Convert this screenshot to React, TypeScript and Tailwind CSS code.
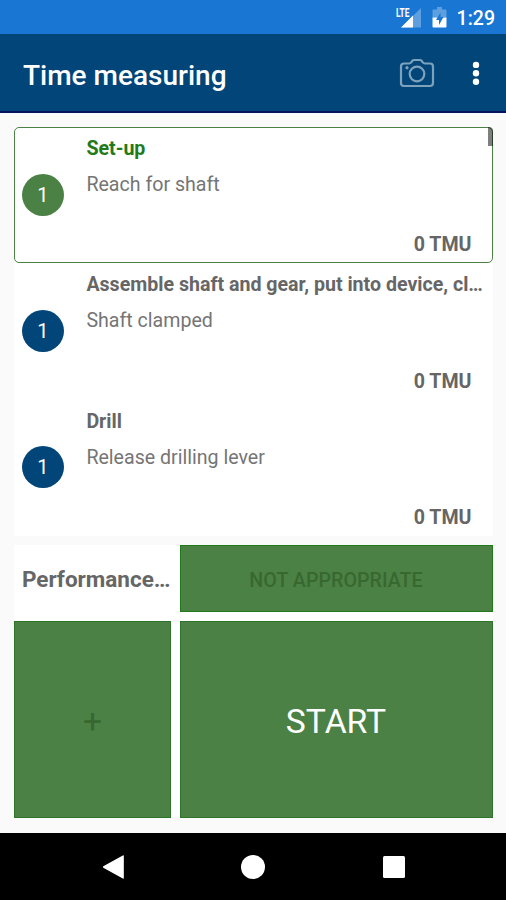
import { useState } from 'react';
import clsx from 'clsx';

interface Step {
    id: number;
    count: number;
    title: string;
    endPoint: string;
    tmu: number;
}

const STEPS: Step[] = [
    { id: 1, count: 1, title: 'Set-up', endPoint: 'Reach for shaft', tmu: 0 },
    { id: 2, count: 1, title: 'Assemble shaft and gear, put into device, cl…', endPoint: 'Shaft clamped', tmu: 0 },
    { id: 3, count: 1, title: 'Drill', endPoint: 'Release drilling lever', tmu: 0 },
];

function StatusBar() {
    return (
        <div className="flex h-[34px] shrink-0 items-center justify-end bg-[#1976d2] pr-[11px] text-white">
            <svg width="28" height="24" viewBox="0 0 28 24" className="mr-[9px]">
                <path d="M26 3v19.5H6z" fill="#fff" fillOpacity="0.3" />
                <path d="M18 10.5v12H6z" fill="#fff" />
                <rect x="0" y="1" width="14.5" height="11.5" fill="#1976d2" />
                <text x="1" y="11.5" fill="#fff" fontSize="12.5" fontWeight="700" textLength="13.5" lengthAdjust="spacingAndGlyphs">LTE</text>
            </svg>
            <svg width="15" height="22" viewBox="0 0 15 22" className="mr-[10px]">
                <path d="M5 1h5v2.5h3.5q1 0 1 1v7H.5v-7q0-1 1-1H5z" fill="#fff" fillOpacity="0.3" />
                <path d="M.5 11.5h14v9q0 1-1 1h-12q-1 0-1-1z" fill="#fff" />
                <path d="M8.5 6.5l-4.5 7.5H7v5l4.5-8h-3z" fill="#1976d2" />
            </svg>
            <span className="pt-1 text-[19.5px] leading-none font-medium">1:29</span>
        </div>
    );
}

function AppBar() {
    return (
        <header className="flex h-[79px] shrink-0 items-center border-b-2 border-[#04125f] bg-[#014579] pr-[25px] pl-[23px] text-white">
            <h1 className="flex-1 pt-1.5 text-[28px] leading-none font-medium">Time measuring</h1>
            <button aria-label="Camera" className="mr-[36px]">
                <svg width="36" height="30" viewBox="0 0 36 30" fill="none" stroke="#7fa2bc" strokeWidth="2.2">
                    <path d="M5 5.5h5q1.5 0 2.5-1.5l.7-1q.8-1 2-1h5.6q1.2 0 2 1l.7 1q1 1.5 2.5 1.5h5q3 0 3 3V25q0 3-3 3H5q-3 0-3-3V8.5q0-3 3-3z" />
                    <circle cx="18" cy="16" r="7.3" />
                    <circle cx="8" cy="9.8" r="1.2" fill="#7fa2bc" strokeWidth="1" />
                </svg>
            </button>
            <button aria-label="More options">
                <svg width="10" height="26" viewBox="0 0 10 26" fill="#fff">
                    <circle cx="5" cy="4.9" r="3.2" />
                    <circle cx="5" cy="13.3" r="3.2" />
                    <circle cx="5" cy="21.7" r="3.2" />
                </svg>
            </button>
        </header>
    );
}

interface StepRowProps {
    step: Step;
    selected: boolean;
    onSelect: (id: number) => void;
}

function StepRow({ step, selected, onSelect }: StepRowProps) {
    return (
        <li
            className={clsx(
                'flex h-[136.4px] items-center rounded-[5px] border-[1.5px] pb-px pl-[6.5px]',
                selected ? 'border-[#4b8145]' : 'border-transparent'
            )}
            onClick={() => onSelect(step.id)}
        >
            <div
                className={clsx(
                    'flex size-[42px] shrink-0 items-center justify-center rounded-full text-[20px] text-white',
                    selected ? 'bg-[#4b8145]' : 'bg-[#014579]'
                )}
            >
                {step.count}
            </div>
            <div className="ml-[22.5px] flex h-full min-w-0 flex-1 flex-col pt-[9px] pr-[5px] pb-1 text-[19.6px] leading-6 text-[#757575]">
                <div className={clsx('truncate font-bold', selected ? 'text-[#1f7a1a]' : 'text-[#666666]')}>{step.title}</div>
                <div className="mt-[12px] truncate">{step.endPoint}</div>
                <div className="mt-auto pr-[15px] text-right font-bold text-[#666666]">{step.tmu} TMU</div>
            </div>
        </li>
    );
}

function NavigationBar() {
    return (
        <nav className="flex h-[67px] shrink-0 items-center justify-center gap-[117.5px] bg-black">
            <svg width="22" height="26" viewBox="0 0 22 26" fill="#fff">
                <path d="M20.8 1.5q1-.5 1 .6v21.8q0 1.1-1 .6L1.3 13.7q-1-.7 0-1.4z" />
            </svg>
            <div className="size-6 rounded-full bg-white" />
            <div className="size-[22px] rounded-[1.5px] bg-white" />
        </nav>
    );
}

export default function App() {
    const [selectedId, setSelectedId] = useState(1);

    return (
        <div className="flex h-[900px] w-[506px] flex-col overflow-hidden bg-[#fafafa] font-[Roboto,sans-serif]">
            <StatusBar />
            <AppBar />

            <main className="flex flex-1 flex-col pt-[14px] pr-[13.5px] pl-[14.4px]">
                <ul className="relative bg-white">
                    {STEPS.map(step => (
                        <StepRow key={step.id} step={step} selected={step.id === selectedId} onSelect={setSelectedId} />
                    ))}
                    {/* Scrollbar thumb */}
                    <span className="absolute top-0 right-0 h-[19px] w-[5px] rounded-tr-[4px] bg-black/50" />
                </ul>

                <div className="mt-[9px] grid grid-cols-[156.5px_313px] grid-rows-[67px_197px] justify-between gap-y-[9px] bg-white">
                    <div className="flex items-center pt-[3px] pl-[7.5px] text-[22.5px] font-bold text-[#666666]">
                        <span className="whitespace-nowrap">Performance…</span>
                    </div>
                    <button className="border border-[#1f7a1a] bg-[#4b8145] pt-1 text-[19.7px] font-medium text-[#38682f]" disabled>
                        NOT APPROPRIATE
                    </button>
                    <button className="border border-[#2f7529] bg-[#4b8145] pt-[5px] text-[33.7px] text-[#38682f]" disabled>
                        +
                    </button>
                    <button className="border border-[#2f7529] bg-[#4b8145] pt-[5px] text-[33.7px] text-white">START</button>
                </div>
            </main>

            <NavigationBar />
        </div>
    );
}
